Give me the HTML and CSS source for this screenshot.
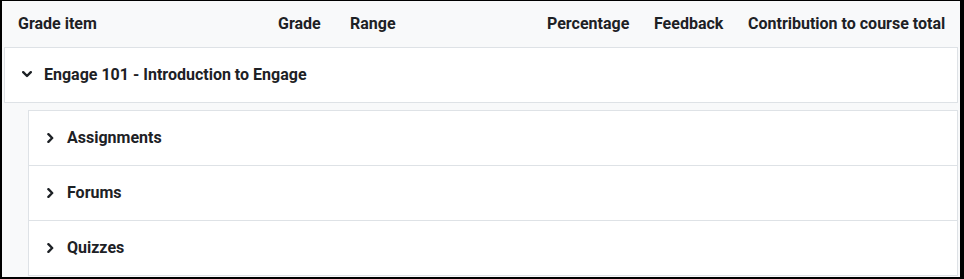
FILE: index.html
```html
<!DOCTYPE html>
<html lang="en">
<head>
    <meta charset="UTF-8">
    <meta name="viewport" content="width=device-width, initial-scale=1.0">
    <title>User report</title>
    <link rel="stylesheet" href="styles.css">
</head>
<body>

    <div class="frame">
        <div class="grade-head">
            <span class="col col-item">Grade item</span>
            <span class="col col-grade">Grade</span>
            <span class="col col-range">Range</span>
            <span class="col col-pct">Percentage</span>
            <span class="col col-feedback">Feedback</span>
            <span class="col col-contrib">Contribution to course total</span>
        </div>

        <div class="category course">
            <div class="cat-row">
                <svg class="chev-down" width="10" height="7" viewBox="0 0 10 7"><path d="M1.2 1.2 L5 5 L8.8 1.2" fill="none" stroke="#1d2125" stroke-width="2.4" stroke-linecap="round" stroke-linejoin="round"/></svg>
                <span>Engage 101 - Introduction to Engage</span>
            </div>
        </div>

        <div class="category children">
            <div class="cat-row sub">
                <svg class="chev-right" width="7" height="10" viewBox="0 0 7 10"><path d="M1.4 1.2 L5.2 5 L1.4 8.8" fill="none" stroke="#1d2125" stroke-width="2.4" stroke-linecap="round" stroke-linejoin="round"/></svg>
                <span>Assignments</span>
            </div>
            <div class="cat-row sub">
                <svg class="chev-right" width="7" height="10" viewBox="0 0 7 10"><path d="M1.4 1.2 L5.2 5 L1.4 8.8" fill="none" stroke="#1d2125" stroke-width="2.4" stroke-linecap="round" stroke-linejoin="round"/></svg>
                <span>Forums</span>
            </div>
            <div class="cat-row sub">
                <svg class="chev-right" width="7" height="10" viewBox="0 0 7 10"><path d="M1.4 1.2 L5.2 5 L1.4 8.8" fill="none" stroke="#1d2125" stroke-width="2.4" stroke-linecap="round" stroke-linejoin="round"/></svg>
                <span>Quizzes</span>
            </div>
        </div>
    </div>

</body>
</html>
```

FILE: styles.css
```css
body {
    margin: 0;
    padding: 0;
    font-family: Roboto, "Liberation Sans", sans-serif;
    color: #1d2125;
}

.frame {
    box-sizing: border-box;
    width: 964px;
    height: 279px;
    border-style: solid;
    border-color: #000;
    border-width: 1px 4px 2px 2px;
    padding: 0 2px;
    background-color: #f8f9fa; /* light grey table background */
    overflow: hidden;
}

.grade-head {
    box-sizing: border-box;
    display: grid;
    grid-template-columns: 260px 72px 197px 107px 94px auto;
    align-items: center;
    height: 46px;
    padding: 0 0 2px 14px;
    font-size: 16px;
    font-weight: 700;
}

.category {
    background-color: #fff;
    border: 1px solid #dee2e6;
}

.children {
    margin-top: 7px;
    margin-left: 24px;
}

.cat-row {
    box-sizing: border-box;
    display: flex;
    align-items: center;
    height: 54px;
    padding-bottom: 1px;
    font-size: 16px;
    font-weight: 700;
}

.course .cat-row {
    padding-left: 17px;
}

.cat-row .chev-down {
    margin-right: 12px;
}

.sub {
    height: 55px;
    padding-left: 18px;
    border-top: 1px solid #dee2e6;
}

.sub:first-child {
    height: 54px;
    border-top: none;
}

.sub .chev-right {
    margin-right: 13px;
}
```
